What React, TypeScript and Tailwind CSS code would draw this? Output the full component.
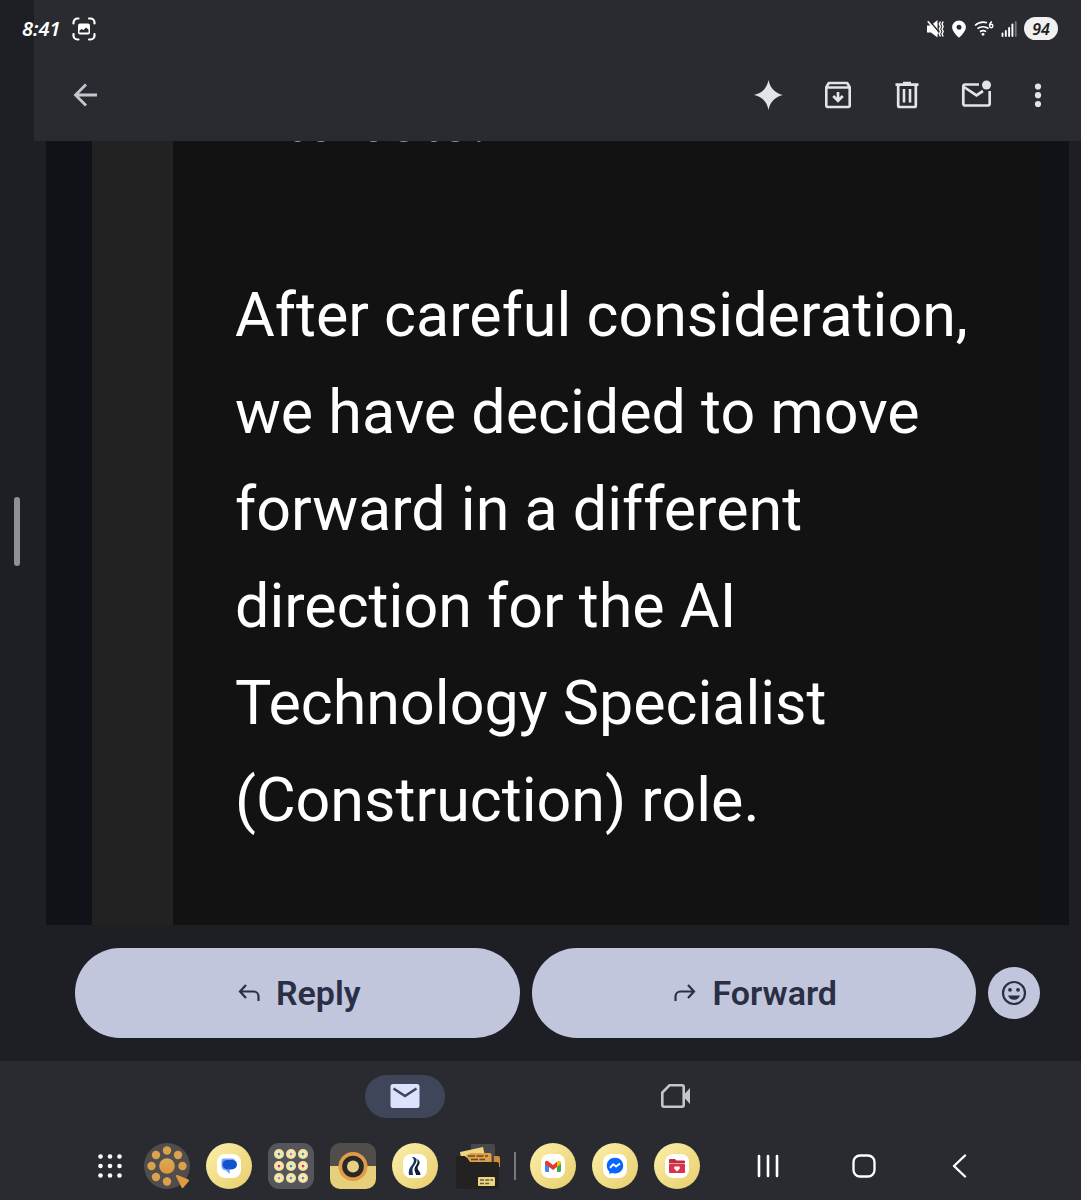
import React from 'react';

type IconProps = { children: React.ReactNode; w: number; h: number };

const Svg: React.FC<IconProps> = ({ children, w, h }) => (
  <svg width={w} height={h} viewBox={`0 0 ${w} ${h}`} fill="none" className="shrink-0" aria-hidden="true">
    {children}
  </svg>
);

const StatusBar = () => (
  <div className="flex h-[57px] items-center justify-between pr-[23px] pl-[22px] text-white">
    <div className="flex items-center gap-2">
      <span className="w-[42px] font-['Noto_Sans',sans-serif] text-[20px] font-semibold italic">8:41</span>
      <Svg w={24} h={24}>
        <path
          d="M1.500 6.500V5.500a4 4 0 0 1 4-4h1M17 1.500h1.500a4 4 0 0 1 4 4v1M22.500 17v1.500a4 4 0 0 1-4 4H17M6.500 22.500H5.500a4 4 0 0 1-4-4V17"
          stroke="white"
          strokeWidth="2.200"
          strokeLinecap="round"
        />
        <rect x="6" y="6.500" width="12" height="11" rx="2" fill="white" />
        <path d="M7.500 15.500v-2l2-1.500 2 1 2.500-2.500 2.500 2v3z" fill="#2a2b30" />
      </Svg>
    </div>
    <div className="flex items-center gap-[7px]">
      <Svg w={17} h={18}>
        <path d="M0 5.500h4L10.500 0v17.500L4 12.500H0z" fill="white" />
        <path d="M2 .3l11 13" stroke="#2a2b30" strokeWidth="1.600" />
        <path d="M.8 1.300l10.500 12.500" stroke="white" strokeWidth="1.600" />
        <path d="M13.500 1.500l-1.200 2.500 1.200 2.500-1.200 2.500 1.200 2.500-1.200 2.500 1.200 2.500M16.200 1.500L15 4l1.200 2.500L15 9l1.200 2.500L15 14l1.200 2.500" stroke="white" strokeWidth="1.400" />
      </Svg>
      <Svg w={16} h={18}>
        <path
          d="M8 .5a6.900 6.900 0 0 0-6.900 6.900C1.100 11.500 8 17.800 8 17.800s6.900-6.300 6.900-10.400A6.900 6.900 0 0 0 8 .5zm0 4.200a2.500 2.500 0 1 1 0 5 2.500 2.500 0 0 1 0-5z"
          fill="white"
          fillRule="evenodd"
        />
      </Svg>
      <Svg w={20} h={18}>
        <path d="M1 5.500C4.500 2.200 9 1.500 13 2.700M3.500 8.700c3-2.600 8-2.600 11 0M6 11.700c2-1.500 4.200-1.500 6 0" stroke="white" strokeWidth="1.700" />
        <circle cx="9" cy="14.300" r="1.400" fill="white" />
        <circle cx="17.200" cy="6" r="1.700" stroke="white" strokeWidth="1.400" />
        <path d="M18 1.700c-1.800.8-2.500 2.300-2.500 4.300" stroke="white" strokeWidth="1.400" />
      </Svg>
      <Svg w={16} h={18}>
        <path d="M1.500 16v-2.500M4.800 16v-5M8.100 16V8M11.400 16V4.500" stroke="white" strokeWidth="1.900" strokeLinecap="round" />
        <path d="M14.700 16V2" stroke="#77787c" strokeWidth="1.900" strokeLinecap="round" />
      </Svg>
      <span className="flex h-[23px] w-[34px] items-center justify-center rounded-full bg-[#f1f1f2] font-['Noto_Sans',sans-serif] text-[16px] font-semibold italic text-[#1e1f24]">
        94
      </span>
    </div>
  </div>
);

const Toolbar = () => (
  <div className="flex h-[84px] items-start justify-between pt-[23px] pr-[35px] pl-[71px] text-[#e3e3eb]">
    <button aria-label="Back">
      <Svg w={30} h={30}>
        <path d="M26 15H5M15 4.500L4.500 15 15 25.500" stroke="#c6c5d0" strokeWidth="2.800" />
      </Svg>
    </button>
    <div className="flex gap-[39px]">
      <button aria-label="Gemini">
        <Svg w={30} h={30}>
          <path d="M14.500 0c1.500 8 6.500 13.300 14.500 15-8 1.700-13 7-14.500 15C13 22 8 16.700 0 15 8 13.300 13 8 14.500 0z" fill="currentColor" />
        </Svg>
      </button>
      <button aria-label="Archive">
        <Svg w={30} h={30}>
          <path d="M3.300 7.200l2.500-4.200h18.400l2.500 4.200v18.300a1.500 1.500 0 0 1-1.500 1.500H4.800a1.500 1.500 0 0 1-1.500-1.500zM3.500 7.500h23" stroke="currentColor" strokeWidth="2.600" strokeLinejoin="round" />
          <path d="M15 12v8.500M10.200 16l4.800 4.800 4.800-4.800" stroke="currentColor" strokeWidth="2.700" />
        </Svg>
      </button>
      <button aria-label="Delete">
        <Svg w={30} h={30}>
          <path d="M3.500 4.600h23M11 3h8M6.200 5v20.500a1.500 1.500 0 0 0 1.500 1.500h14.600a1.500 1.500 0 0 0 1.500-1.500V5" stroke="currentColor" strokeWidth="2.700" />
          <path d="M12 9v13.500M18 9v13.500" stroke="currentColor" strokeWidth="2.600" />
        </Svg>
      </button>
      <button aria-label="Mark as unread">
        <Svg w={30} h={30}>
          <path d="M18 4.500H4a1.700 1.700 0 0 0-1.700 1.700v17.600A1.700 1.700 0 0 0 4 25.500h23a1.700 1.700 0 0 0 1.700-1.700V11" stroke="currentColor" strokeWidth="2.700" />
          <path d="M3 7l12.500 8.300L22 11" stroke="currentColor" strokeWidth="2.700" />
          <circle cx="25.500" cy="5" r="4.500" fill="currentColor" />
        </Svg>
      </button>
      <button aria-label="More options">
        <Svg w={16} h={30}>
          <circle cx="8" cy="6.500" r="3.100" fill="currentColor" />
          <circle cx="8" cy="15.200" r="3.100" fill="currentColor" />
          <circle cx="8" cy="24" r="3.100" fill="currentColor" />
        </Svg>
      </button>
    </div>
  </div>
);

const MessageBody = () => (
  <main className="flex flex-1 overflow-hidden">
    <div className="flex w-[46px] shrink-0 items-center pb-1 pl-[14px]">
      <div className="h-[69px] w-[6px] rounded-full bg-[#8f9097]" />
    </div>
    <div className="w-[46px] shrink-0 bg-[#111217]" />
    <div className="w-[81px] shrink-0 bg-[#222222]" />
    <div className="flex-1 bg-[#121212] pl-[62px] font-[Roboto,sans-serif] text-[61px] leading-[97px] text-white">
      {/* scrolled so the last line of the previous paragraph is almost out of view */}
      <p className="-mt-[69px]">interests.</p>
      <p className="mt-[98px]">
        After careful consideration, we have decided to move forward in a different direction for the AI Technology
        Specialist (Construction) role.
      </p>
    </div>
    <div className="w-[26px] shrink-0 bg-[#111217]" />
    <div className="w-3 shrink-0" />
  </main>
);

const ReplyBar = () => (
  <div className="flex items-center gap-3 pt-[23px] pr-[41px] pb-[23px] pl-[75px] font-[Roboto,sans-serif] text-[34px] font-semibold text-[#2a2f45]">
    <button className="flex h-[90px] flex-1 items-center justify-center gap-4 rounded-full bg-[#c1c6dd] pl-1">
      <Svg w={22} h={20}>
        <path d="M8 2L2 8.500 8 15M2 8.500h13.500a5 5 0 0 1 5 5V18" stroke="currentColor" strokeWidth="2.200" />
      </Svg>
      Reply
    </button>
    <button className="flex h-[90px] flex-1 items-center justify-center gap-4 rounded-full bg-[#c1c6dd] pl-1">
      <Svg w={22} h={20}>
        <path d="M14 2l6 6.500-6 6.500M20 8.500H6.500a5 5 0 0 0-5 5V18" stroke="currentColor" strokeWidth="2.200" />
      </Svg>
      Forward
    </button>
    <button aria-label="Add reaction" className="flex size-[52px] items-center justify-center rounded-full bg-[#c1c6dd]">
      <Svg w={26} h={26}>
        <circle cx="13" cy="13" r="11" stroke="currentColor" strokeWidth="2.200" />
        <circle cx="9" cy="9.800" r="1.900" fill="currentColor" />
        <circle cx="17" cy="9.800" r="1.900" fill="currentColor" />
        <path d="M7 15.500h12c-1 2.800-3.200 4.300-6 4.300s-5-1.500-6-4.300z" fill="currentColor" />
      </Svg>
    </button>
  </div>
);

const Tabs = () => (
  <nav className="grid h-[70px] grid-cols-2 items-center justify-items-center px-[25%]">
    <button aria-label="Mail" className="flex h-[43px] w-20 items-center justify-center rounded-full bg-[#404659]">
      <Svg w={30} h={24}>
        <rect x="0.500" width="29" height="24" rx="2.500" fill="#dce1fd" />
        <path d="M3.500 4.500L15 12l11.500-7.500" stroke="#404659" strokeWidth="2.600" />
      </Svg>
    </button>
    <button aria-label="Meet">
      <Svg w={30} h={24}>
        <path d="M8.500 1.300H21a1.700 1.700 0 0 1 1.700 1.700v18a1.700 1.700 0 0 1-1.700 1.700H3A1.700 1.700 0 0 1 1.300 21V8.500z" stroke="#c6c5ca" strokeWidth="2.600" />
        <path d="M23 10.500l6-6.500v16L23 13.500z" fill="#c6c5ca" />
      </Svg>
    </button>
  </nav>
);

// gold disc with a white rounded tile, shared by most of the dock apps
const GoldApp: React.FC<{ label: string; children: React.ReactNode }> = ({ label, children }) => (
  <button
    aria-label={label}
    className="flex size-[46px] items-center justify-center rounded-full bg-linear-to-br from-[#fbf0a8] to-[#e8cd6c]"
  >
    <span className="flex size-6 items-center justify-center rounded-lg bg-white">{children}</span>
  </button>
);

const DialerIcon = () => (
  <Svg w={46} h={46}>
    <defs>
      <linearGradient id="dial" x1="0" y1="0" x2="0" y2="1">
        <stop stopColor="#d9ab5b" />
        <stop offset="1" stopColor="#df933a" />
      </linearGradient>
    </defs>
    <circle cx="23" cy="23" r="23" fill="#504e4c" />
    <circle cx="23" cy="23" r="7.800" fill="url(#dial)" />
    <g fill="#dba14d">
      <circle cx="23" cy="7.500" r="4.200" />
      <circle cx="12" cy="12" r="4.200" />
      <circle cx="34" cy="12" r="4.200" />
      <circle cx="7.500" cy="23" r="4.200" />
      <circle cx="38.500" cy="23" r="4.200" />
      <circle cx="12" cy="34" r="4.200" />
      <circle cx="23" cy="38.500" r="4.200" />
    </g>
    <path d="M33 33l11 4.500-5.500 6.500z" fill="#e09a40" stroke="#e09a40" strokeWidth="2" strokeLinejoin="round" />
  </Svg>
);

const folderDots = ['#4a8b7c', '#c08084', '#619266', '#d83343', '#4f8d91', '#dc3c48', '#b18a92', '#5e969c', '#8c8675'];

const FolderIcon = () => (
  <Svg w={46} h={46}>
    <rect width="46" height="46" rx="11" fill="#55565b" />
    {folderDots.map((color, i) => (
      <g key={i}>
        <circle cx={11 + (i % 3) * 12} cy={11 + Math.floor(i / 3) * 12} r="5" fill="#f4e5a0" />
        <circle cx={11 + (i % 3) * 12} cy={11 + Math.floor(i / 3) * 12} r="2.200" fill="white" />
        <circle cx={11 + (i % 3) * 12} cy={11 + Math.floor(i / 3) * 12} r="1.500" fill={color} />
      </g>
    ))}
  </Svg>
);

const CameraIcon = () => (
  <Svg w={46} h={46}>
    <defs>
      <clipPath id="cam">
        <rect width="46" height="46" rx="10" />
      </clipPath>
    </defs>
    <g clipPath="url(#cam)">
      <rect width="46" height="23" fill="#504d4b" />
      <rect y="23" width="46" height="23" fill="#e6cf7a" />
    </g>
    <circle cx="23" cy="23.500" r="14.500" fill="#e09b48" />
    <circle cx="23" cy="23.500" r="10.800" fill="#292826" />
    <circle cx="23" cy="23.500" r="6" fill="#e6d083" />
  </Svg>
);

const FilesIcon = () => (
  <Svg w={46} h={46}>
    <path d="M17 1h22a2 2 0 0 1 2 2v16H17z" fill="#48484b" />
    <path d="M6 9l23-5 2 9-24 2z" fill="#eed580" />
    <path d="M12 12l5-2h19a1.500 1.500 0 0 1 1.500 1.500V20H16z" fill="#dca04b" />
    <path d="M40 13h4a2 2 0 0 1 2 2v9h-6z" fill="#d08c39" />
    <path d="M14 13h20M17 16.500h14" stroke="#684923" strokeWidth="1.500" strokeDasharray="7 1.500" />
    <path d="M5 13h6l5 6h27a2 2 0 0 1 2 2v22a3 3 0 0 1-3 3H5a3 3 0 0 1-3-3V16a3 3 0 0 1 3-3z" fill="#232220" />
    <rect x="24" y="34" width="17" height="9" rx="1" fill="#ead783" />
    <path d="M26 37h13M26 40.500h10" stroke="#685e35" strokeWidth="1.300" strokeDasharray="4 1.200" />
  </Svg>
);

const Dock = () => (
  <div className="flex h-[69px] items-center pr-[73px] pl-[92px]">
    <div className="flex items-center gap-4">
      <button aria-label="All apps" className="flex w-9 justify-center">
        <Svg w={24} h={24}>
          {[2.5, 12, 21.5].map((y) =>
            [2.5, 12, 21.5].map((x) => <circle key={`${x}-${y}`} cx={x} cy={y} r="2.300" fill="white" />),
          )}
        </Svg>
      </button>
      <button aria-label="Phone"><DialerIcon /></button>
      <GoldApp label="Messages">
        <Svg w={18} h={18}>
          <path d="M3.800 1.500h8.700c1.500 0 2.500 1 2.500 2.300v5.400c0 2-1.500 3.300-3.500 3.300H10L9.500 17 6 13.500A5 5 0 0 1 1.500 8.700V3.800A2.300 2.300 0 0 1 3.800 1.500z" fill="#74a2fb" />
          <rect x="2.500" y="3" width="14.500" height="9.200" rx="4.600" fill="#1254cf" />
        </Svg>
      </GoldApp>
      <button aria-label="App folder"><FolderIcon /></button>
      <button aria-label="Camera"><CameraIcon /></button>
      <GoldApp label="River">
        <Svg w={18} h={20}>
          <path d="M6 1c3 0 5 1.500 4.500 4C10 8.500 7 10 6.500 13c-.2 2 .2 4 .7 6H3c-.7-5 .8-7.500 3-10C8 6.500 9 3.500 6 1z" fill="#17325f" />
          <path d="M10 2.500c4 1.500 4.500 4.500 2.500 7-1.500 2-1 4 .5 5.500 1 1.200 1.500 2.500 1.500 4H10c0-2-1.500-3-1.500-5.500 0-3.500 3.500-5 3-8.500 0-1-.6-1.800-1.500-2.500z" fill="#111d35" />
        </Svg>
      </GoldApp>
      <button aria-label="My Files"><FilesIcon /></button>
    </div>
    <div className="mx-[14px] h-7 w-[2px] bg-[#77787d]" />
    <div className="flex items-center gap-4">
      <GoldApp label="Gmail">
        <Svg w={18} h={14}>
          <path d="M1 3v8.500A1.500 1.500 0 0 0 2.500 13H5V6z" fill="#4285f4" />
          <path d="M17 3v8.500a1.500 1.500 0 0 1-1.500 1.500H13V6z" fill="#34a853" />
          <path d="M13 3l1.200-1A1.800 1.800 0 0 1 17 3.500V5l-4 3z" fill="#fbbc04" />
          <path d="M5 8L1 5V3.500A1.800 1.800 0 0 1 3.800 2L9 6l4-3.200V8l-4 3z" fill="#e33b30" />
        </Svg>
      </GoldApp>
      <GoldApp label="Messenger">
        <Svg w={18} h={18}>
          <path d="M9 .8C4.200.8.800 4.200.8 8.700c0 2.400 1 4.400 2.600 5.800V17l2.500-1.100c1 .3 2 .5 3.100.5 4.800 0 8.200-3.300 8.200-7.700S13.800.8 9 .8z" fill="#0866ff" />
          <path d="M4 10.800L7.300 7.200l2.800 2.200L14 6.500" stroke="white" strokeWidth="1.900" strokeLinejoin="round" />
        </Svg>
      </GoldApp>
      <GoldApp label="Favorites folder">
        <Svg w={18} h={16}>
          <path d="M1 2a1 1 0 0 1 1-1h5l1.500 1.500H16a1 1 0 0 1 1 1V5H1z" fill="#bd2d43" />
          <rect x="1" y="5.500" width="16" height="9.500" rx="1" fill="#d8324c" />
          <path d="M9 13.500L6.300 10.700a1.700 1.700 0 0 1 2.700-2 1.700 1.700 0 0 1 2.700 2z" fill="white" />
        </Svg>
      </GoldApp>
    </div>
    <div className="ml-auto flex">
      <button aria-label="Recents" className="flex w-24 justify-center">
        <Svg w={24} h={24}>
          <path d="M3 2v20M12 2v20M21 2v20" stroke="white" strokeWidth="2.600" strokeLinecap="round" />
        </Svg>
      </button>
      <button aria-label="Home" className="flex w-24 justify-center">
        <Svg w={24} h={24}>
          <rect x="1.500" y="1.500" width="21" height="21" rx="6.500" stroke="white" strokeWidth="2.300" />
        </Svg>
      </button>
      <button aria-label="Back to previous screen" className="flex w-24 justify-center">
        <Svg w={24} h={24}>
          <path d="M17 1.500L6 12l11 10.500" stroke="white" strokeWidth="2.400" strokeLinecap="round" strokeLinejoin="round" />
        </Svg>
      </button>
    </div>
  </div>
);

export default function App() {
  return (
    <div className="flex min-h-screen flex-col bg-[#1e1f25]">
      <header className="bg-[linear-gradient(to_right,#1e1f25_34px,#2a2b30_34px)]">
        <StatusBar />
        <Toolbar />
      </header>
      <MessageBody />
      <ReplyBar />
      <footer className="bg-[#2a2b30]">
        <Tabs />
        <Dock />
      </footer>
    </div>
  );
}
